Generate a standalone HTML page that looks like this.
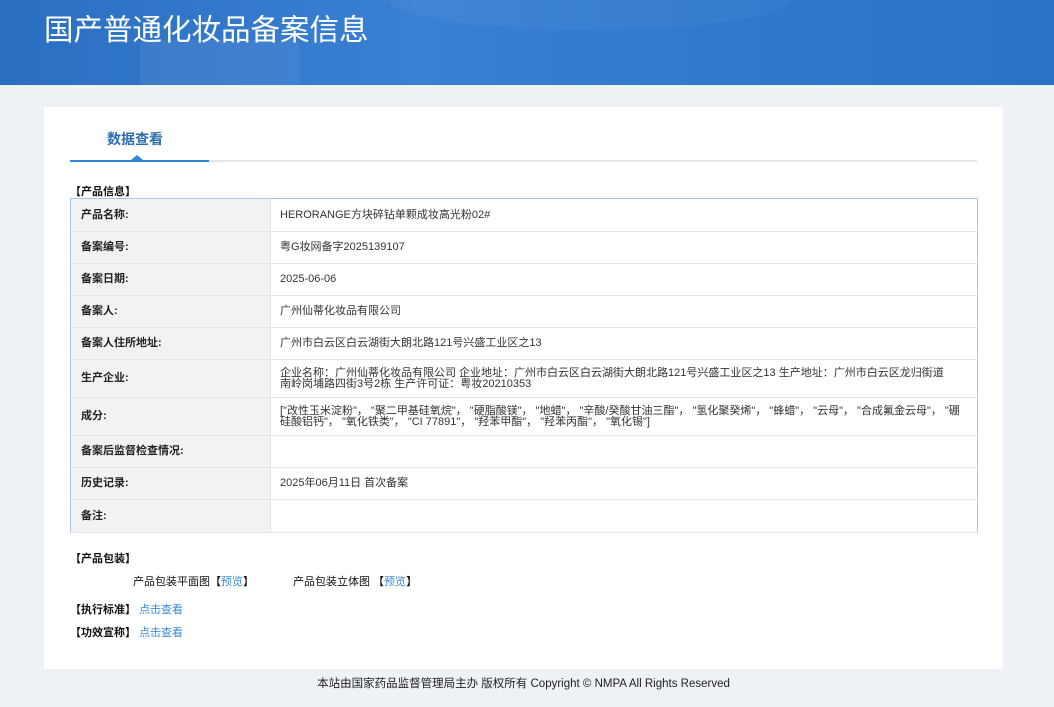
<!DOCTYPE html>
<html><head><meta charset="utf-8"><style>
*{margin:0;padding:0;box-sizing:border-box}
body{width:1054px;height:707px;background:#eef2f6;font-family:"Liberation Sans","Noto Sans CJK SC",sans-serif;font-size:11px;color:#333;position:relative;overflow:hidden}
.hd{position:absolute;left:0;top:0;width:1054px;height:85px;background:linear-gradient(90deg,#2a6fc0 0%,#3a80d4 40%,#2f78cc 70%,#2a72c8 100%);overflow:hidden}
.hd h1{position:absolute;left:44px;top:7px;font-size:29.5px;font-weight:normal;color:#fff;font-family:"Noto Sans CJK SC",sans-serif}
.card{position:absolute;left:44px;top:107px;width:959px;height:562px;background:#fff}
.tab{position:absolute;left:63px;top:22px;font-size:14px;font-weight:bold;color:#2b6cb0}
.line{position:absolute;left:26px;top:53px;width:907px;height:2px;background:#e4e6ea}
.line i{position:absolute;left:0;top:0;width:139px;height:2px;background:#2e8ad6}
.tri{position:absolute;left:87px;top:48px;width:0;height:0;border-left:6px solid transparent;border-right:6px solid transparent;border-bottom:5px solid #2e8ad6}
.sec{position:absolute;left:26px;font-weight:bold;color:#111;font-size:11px}
table{position:absolute;left:26px;top:91px;width:908px;border-collapse:collapse;border:1px solid #a9c4ea}
td{border-bottom:1px solid #e3e3e3;font-size:11px;vertical-align:middle;line-height:11px}
td.l{width:200px;background:#f2f2f2;font-weight:bold;padding-left:10px;color:#222;border-right:1px solid #e3e3e3}
td.v{padding-left:9px;color:#333}
.a{color:#3b8ad8}
.ft{position:absolute;left:0;top:675px;width:1047px;text-align:center;font-size:11.5px;color:#222}
</style></head><body>
<div class="hd">
<div style="position:absolute;left:140px;top:40px;width:160px;height:60px;background:rgba(255,255,255,.06);border-radius:6px"></div>
<div style="position:absolute;left:390px;top:-30px;width:400px;height:60px;background:rgba(255,255,255,.04);border-radius:50%"></div>
<h1>国产普通化妆品备案信息</h1></div>
<div class="card">
<div class="tab">数据查看</div>
<div class="line"><i></i></div>
<div class="tri"></div>
<div class="sec" style="top:76px">【产品信息】</div>
<table>
<tr style="height:33px"><td class="l">产品名称:</td><td class="v">HERORANGE方块碎钻单颗成妆高光粉02#</td></tr>
<tr style="height:32px"><td class="l">备案编号:</td><td class="v">粤G妆网备字2025139107</td></tr>
<tr style="height:32px"><td class="l">备案日期:</td><td class="v">2025-06-06</td></tr>
<tr style="height:32px"><td class="l">备案人:</td><td class="v">广州仙蒂化妆品有限公司</td></tr>
<tr style="height:32px"><td class="l">备案人住所地址:</td><td class="v">广州市白云区白云湖街大朗北路121号兴盛工业区之13</td></tr>
<tr style="height:38px"><td class="l">生产企业:</td><td class="v">企业名称：广州仙蒂化妆品有限公司 企业地址：广州市白云区白云湖街大朗北路121号兴盛工业区之13 生产地址：广州市白云区龙归街道<br>南岭岗埔路四街3号2栋 生产许可证：粤妆20210353</td></tr>
<tr style="height:38px"><td class="l">成分:</td><td class="v">["改性玉米淀粉"， "聚二甲基硅氧烷"， "硬脂酸镁"， "地蜡"， "辛酸/癸酸甘油三酯"， "氢化聚癸烯"， "蜂蜡"， "云母"， "合成氟金云母"， "硼<br>硅酸铝钙"， "氧化铁类"， "CI 77891"， "羟苯甲酯"， "羟苯丙酯"， "氧化锡"]</td></tr>
<tr style="height:32px"><td class="l">备案后监督检查情况:</td><td class="v"></td></tr>
<tr style="height:32px"><td class="l">历史记录:</td><td class="v">2025年06月11日 首次备案</td></tr>
<tr style="height:33px"><td class="l">备注:</td><td class="v"></td></tr>
</table>
<div class="sec" style="top:443px">【产品包装】</div>
<div style="position:absolute;left:89px;top:466px;color:#111">产品包装平面图【<span class="a">预览</span>】</div>
<div style="position:absolute;left:249px;top:466px;color:#111">产品包装立体图 【<span class="a">预览</span>】</div>
<div class="sec" style="top:494px">【执行标准】 <span class="a" style="font-weight:normal">点击查看</span></div>
<div class="sec" style="top:517px">【功效宣称】 <span class="a" style="font-weight:normal">点击查看</span></div>
</div>
<div class="ft">本站由国家药品监督管理局主办 版权所有 Copyright © NMPA All Rights Reserved</div>
</body></html>
